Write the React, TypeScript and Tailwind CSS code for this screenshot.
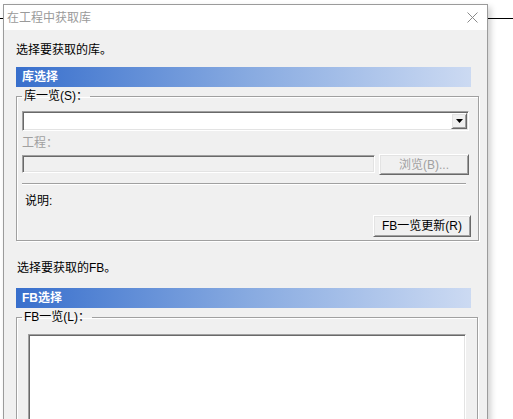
const sunken =
  'border border-t-[#a0a0a0] border-l-[#a0a0a0] border-r-white border-b-white shadow-[inset_1px_1px_0_#696969,inset_-1px_-1px_0_#e3e3e3]';
const raised =
  'border border-t-white border-l-white border-r-[#696969] border-b-[#696969] shadow-[inset_1px_1px_0_#e3e3e3,inset_-1px_-1px_0_#a0a0a0]';
const groupBox =
  'border border-[#a0a0a0] shadow-[inset_1px_1px_0_#fff,1px_1px_0_#fff]';

const SectionBar = ({ title }: { title: string }) => (
  <div className="flex h-[20px] w-[455px] items-center bg-gradient-to-r from-[#386fcc] via-[#86a9e0] to-[#ccdaf2] pl-[6px] text-[12px] font-bold leading-[16px] text-white">
    {title}
  </div>
);

export default function App() {
  return (
    <div
      className="relative h-[419px] w-[513px] overflow-hidden bg-white text-[12px] leading-[16px] text-black"
      style={{ fontFamily: '"Liberation Sans", "Noto Sans CJK SC", sans-serif' }}
    >
      {/* line behind the window */}
      <div className="absolute left-0 top-[18px] h-px w-full bg-black" />

      <div className="relative ml-[3px] mt-[4px] w-[485px] border border-[#9b9b9b] shadow-[3px_3px_6px_rgba(0,0,0,0.18)]">
        {/* Title bar */}
        <div className="flex h-[25px] items-center justify-between bg-white pl-[3px] pr-[9px]">
          <span className="text-[#9a9a9a]">在工程中获取库</span>
          <svg width="11" height="11" viewBox="0 0 11 11">
            <path d="M0.5 0.5 L10.5 10.5 M10.5 0.5 L0.5 10.5" stroke="#8a8a8a" strokeWidth="1" />
          </svg>
        </div>

        {/* Body */}
        <div className="flex flex-col bg-[#f0f0f0] pb-[40px] pl-[12px] pr-[9px] pt-[12px]">
          <div>选择要获取的库。</div>
          <div className="mt-[9px]">
            <SectionBar title="库选择" />
          </div>

          <fieldset className={`mt-[1px] flex flex-col pb-[3px] pl-[5px] pr-[9px] ${groupBox}`}>
            <legend className="px-[2px]">库一览(S)：</legend>

            <div className={`mt-[7px] flex h-[20px] items-stretch justify-end bg-white p-px ${sunken}`}>
              <div className={`flex w-[16px] items-center justify-center bg-[#f0f0f0] ${raised}`}>
                <svg width="7" height="4" viewBox="0 0 7 4">
                  <path d="M0 0 H7 L3.5 4 Z" fill="#000" />
                </svg>
              </div>
            </div>

            <div className="mt-[4px] text-[#a0a0a0]">工程：</div>

            <div className="mt-[3px] flex items-start gap-[4px]">
              <div className={`mt-px h-[18px] w-[353px] bg-[#f0f0f0] ${sunken}`} />
              <div
                className={`flex h-[21px] w-[90px] items-center justify-center bg-[#f0f0f0] text-[#a0a0a0] ${raised}`}
              >
                浏览(B)...
              </div>
            </div>

            <div className="mt-[8px] h-[2px] w-[444px] border-t border-t-[#a0a0a0] border-b border-b-white" />

            <div className="mt-[8px] pl-[3px]">说明:</div>

            <div className="-mr-[2px] mt-[6px] flex justify-end">
              <div className={`flex h-[22px] w-[98px] items-center justify-center bg-[#f0f0f0] ${raised}`}>
                FB一览更新(R)
              </div>
            </div>
          </fieldset>

          <div className="mt-[19px] pl-px">选择要获取的FB。</div>
          <div className="mt-[12px]">
            <SectionBar title="FB选择" />
          </div>

          <fieldset className={`mt-[1px] flex flex-col pb-[10px] pl-[11px] pr-[11px] ${groupBox}`}>
            <legend className="-ml-[6px] px-[2px]">FB一览(L)：</legend>
            <div className={`mt-[9px] h-[110px] bg-white ${sunken}`} />
          </fieldset>
        </div>
      </div>
    </div>
  );
}
